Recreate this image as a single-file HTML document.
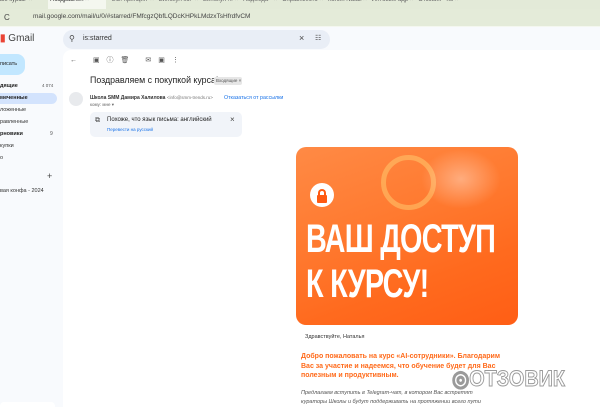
<!DOCTYPE html>
<html><head><meta charset="utf-8"><style>
*{margin:0;padding:0;box-sizing:border-box}
body{width:600px;height:407px;overflow:hidden;background:#f8fafd;font-family:"Liberation Sans",sans-serif;position:relative;color:#1f1f1f}
.a{position:absolute;white-space:nowrap}
</style></head><body>
<div class="a" style="left:0;top:0;width:600px;height:9px;background:#e3ead8"></div>
<div class="a" style="left:48px;top:0;width:58px;height:9px;background:#f4f7ef"></div>
<div class="a" style="left:0;top:-3px;font-size:6px;color:#555">ые курсы &nbsp;×</div>
<div class="a" style="left:50px;top:-3px;font-size:6px;color:#333">Поздравлен ×</div>
<div class="a" style="left:112px;top:-3px;font-size:6px;color:#666">2.2. принцип &nbsp;×&nbsp;&nbsp; Bинокул sc. &nbsp;×&nbsp;&nbsp; Bинокул ... ×&nbsp;&nbsp; Надежда • ×&nbsp;&nbsp; Справ.место ×&nbsp;&nbsp; Копия Natali ×&nbsp;&nbsp; Интовые адр ×&nbsp;&nbsp; Отзовик • Ко ×</div>
<div class="a" style="left:0;top:9px;width:600px;height:18px;background:#f4f7ef"></div>
<div class="a" style="left:0;top:9px;width:600px;height:17px;background:#e4ebd9"></div>
<div class="a" style="left:4px;top:13px;font-size:8px;color:#444">C</div>
<div class="a" style="left:33px;top:13px;font-size:6.5px;color:#444">mail.google.com/mail/u/0/#starred/FMfcgzQbfLQDcKHPkLMdzxTsHfrdfvCM</div>
<div class="a" style="left:0;top:33px;font-size:10px;color:#444"><span style="color:#ea4335;font-weight:bold">▮</span> Gmail</div>
<div class="a" style="left:63px;top:30px;width:267px;height:19px;background:#e9eef6;border-radius:10px"></div>
<div class="a" style="left:69px;top:34px;font-size:8px;color:#444">⚲</div>
<div class="a" style="left:83px;top:35px;font-size:7px;color:#333">is:starred</div>
<div class="a" style="left:299px;top:33px;font-size:9px;color:#444">×</div>
<div class="a" style="left:315px;top:34px;font-size:7px;color:#444">☷</div>
<div class="a" style="left:-10px;top:54px;width:35px;height:21px;background:#c2e7ff;border-radius:8px"></div>
<div class="a" style="left:0;top:61px;font-size:5.5px">писать</div>
<div class="a" style="left:0;top:83px;font-size:5.5px;font-weight:bold">дящие</div>
<div class="a" style="left:42px;top:83px;font-size:4.5px;color:#555">4 074</div>
<div class="a" style="left:-10px;top:93px;width:67px;height:11px;background:#d3e3fd;border-radius:0 6px 6px 0"></div>
<div class="a" style="left:0;top:95px;font-size:5.5px;font-weight:bold">меченные</div>
<div class="a" style="left:0;top:107px;font-size:5.5px;color:#333">ложенные</div>
<div class="a" style="left:0;top:119px;font-size:5.5px;color:#333">равленные</div>
<div class="a" style="left:0;top:131px;font-size:5.5px;font-weight:bold">рновики</div>
<div class="a" style="left:50px;top:131px;font-size:5px;color:#555">9</div>
<div class="a" style="left:0;top:143px;font-size:5.5px;color:#333">купки</div>
<div class="a" style="left:0;top:155px;font-size:5.5px;color:#333">о</div>
<div class="a" style="left:47px;top:171px;font-size:9px;color:#444">+</div>
<div class="a" style="left:0;top:188px;font-size:5.5px;color:#333">вая конфа - 2024</div>
<div class="a" style="left:63px;top:50px;width:537px;height:357px;background:#fff;border-radius:8px 0 0 0"></div>
<div class="a" style="left:70px;top:55px;font-size:7px;color:#555;letter-spacing:7px">←&nbsp;▣ⓘ🗑&nbsp;✉▣⋮</div>
<div class="a" style="left:90px;top:75px;font-size:8.8px;color:#1f1f1f">Поздравляем с покупкой курса!</div>
<div class="a" style="left:214px;top:77px;width:28px;height:8px;background:#e6e6e6;border-radius:2px;font-size:4.5px;color:#555;padding:1px 2px">Входящие ×</div>
<div class="a" style="left:69px;top:92px;width:14px;height:14px;border-radius:50%;background:#e8eaed"></div>
<div class="a" style="left:90px;top:95px;font-size:5px;font-weight:bold;color:#333">Школа SMM Дамира Халилова <span style="font-weight:normal;color:#777;font-size:4.5px">&lt;info@smm-trends.ru&gt;</span></div>
<div class="a" style="left:224px;top:95px;font-size:5.3px;color:#1a73e8;background:#fff">Отказаться от рассылки</div>
<div class="a" style="left:90px;top:102px;font-size:4.5px;color:#666">кому: мне ▾</div>
<div class="a" style="left:90px;top:112px;width:152px;height:25px;background:#f1f4f9;border-radius:5px"></div>
<div class="a" style="left:95px;top:117px;font-size:7px;color:#444">⧉</div>
<div class="a" style="left:107px;top:117px;font-size:6px;color:#222">Похоже, что язык письма: английский</div>
<div class="a" style="left:107px;top:127px;font-size:4.5px;color:#1a73e8">Перевести на русский</div>
<div class="a" style="left:230px;top:115px;font-size:8px;color:#444">×</div>
<div class="a" style="left:296px;top:147px;width:222px;height:178px;border-radius:10px;overflow:hidden;background:linear-gradient(160deg,#ff8a45 0%,#ff7a30 40%,#ff6a1e 70%,#ff5e15 100%)">
 <div class="a" style="left:85px;top:8px;width:55px;height:55px;border-radius:50%;border:5px solid rgba(255,200,110,.55)"></div>
 <div class="a" style="left:125px;top:2px;width:80px;height:60px;background:radial-gradient(ellipse,rgba(255,220,200,.5),transparent 70%)"></div>
 <div class="a" style="left:14px;top:36px;width:24px;height:24px;border-radius:50%;background:#fff"></div>
 <div class="a" style="left:21px;top:48px;width:10px;height:8px;background:#ff5a12;border-radius:1px"></div>
 <div class="a" style="left:22px;top:42px;width:8px;height:8px;border:2px solid #ff5a12;border-bottom:none;border-radius:4px 4px 0 0"></div>
 <div class="a" style="left:10px;top:70px;font-size:40px;font-weight:bold;color:#fff;line-height:45px;transform:scaleX(.72);transform-origin:left;letter-spacing:-1px">ВАШ ДОСТУП<br>К КУРСУ!</div>
</div>
<div class="a" style="left:305px;top:334px;font-size:5.5px;color:#333">Здравствуйте, Наталья</div>
<div class="a" style="left:301px;top:352px;font-size:7px;font-weight:bold;color:#ff6a1a;line-height:9.5px">Добро пожаловать на курс «AI-сотрудники». Благодарим<br>Вас за участие и надеемся, что обучение будет для Вас<br>полезным и продуктивным.</div>
<div class="a" style="left:301px;top:389px;font-size:5.5px;font-style:italic;color:#555;line-height:9px">Предлагаем вступить в Telegram-чат, в котором Вас встретят<br>кураторы Школы и будут поддерживать на протяжении всего пути</div>
<div class="a" style="left:452px;top:366px;font-size:22px;font-weight:bold;color:rgba(255,255,255,.6);-webkit-text-stroke:1px #9a9a9a;letter-spacing:0px;transform:scaleX(.9);transform-origin:left">◎ОТЗОВИК</div>
<div class="a" style="left:0;top:402px;width:55px;height:5px;background:#fff;border-radius:4px 4px 0 0"></div>
</body></html>
